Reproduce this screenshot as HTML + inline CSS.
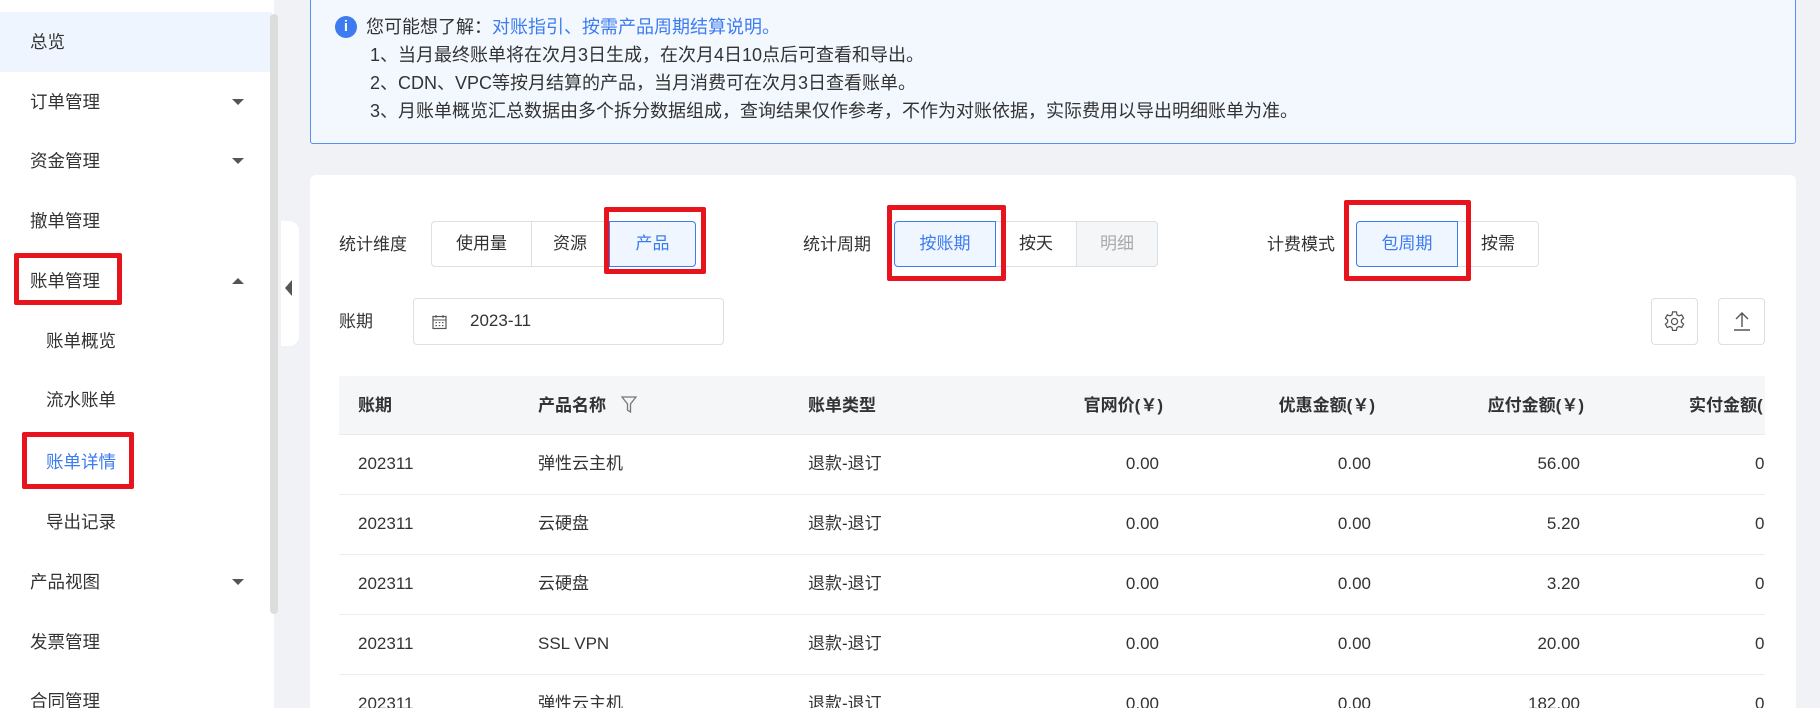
<!DOCTYPE html>
<html><head><meta charset="utf-8"><style>
*{box-sizing:border-box;margin:0;padding:0}
html,body{overflow:hidden}
body{width:1820px;height:708px;background:#f0f2f5;font-family:"Liberation Sans","Noto Sans CJK SC",sans-serif;color:#333;position:relative}
.abs{position:absolute}
.side{left:0;top:0;width:274px;height:708px;background:#fff;overflow:hidden}
.item{position:absolute;left:0;width:272px;height:60px;font-size:17.5px;line-height:60px;padding-left:30px;color:#333}
.item.sub{padding-left:46px}
.arr{position:absolute;left:232px;top:27px;width:0;height:0;border-left:6px solid transparent;border-right:6px solid transparent;border-top:6px solid #555}
.arr.up{border-top:none;border-bottom:6px solid #555}
.red{position:absolute;border:5px solid #e8141d;border-radius:2px}
.notice{left:310px;top:-2px;width:1486px;height:146px;background:#f3f8ff;border:1px solid #5a8ff0;border-radius:3px;color:#333}
.card{left:310px;top:175px;width:1486px;height:533px;background:#fff;border-radius:6px 6px 0 0}
.lbl{position:absolute;font-size:17px;line-height:22px;color:#333}
.btn{position:absolute;height:46px;border:1px solid #dcdfe6;font-size:17px;line-height:44px;text-align:center;background:#fff;color:#333}
.btn.sel{background:#eff6ff;border-color:#3d7bf0;color:#3d7bf0;z-index:2}
.btn.dis{background:#f5f6f8;color:#aaa}
.th{position:absolute;font-size:17px;line-height:22px;font-weight:bold;color:#333;top:395px}
.td{position:absolute;font-size:17px;line-height:22px;color:#333}
.r{text-align:right}
#rows{position:absolute;left:0;top:0;width:1820px;height:708px;overflow:hidden}
</style></head><body>
<div class="abs side">
 <div class="item" style="top:12px;background:#eff5ff">总览</div>
 <div class="item" style="top:72px">订单管理<span class="arr"></span></div>
 <div class="item" style="top:131px">资金管理<span class="arr"></span></div>
 <div class="item" style="top:191px">撤单管理</div>
 <div class="item" style="top:251px">账单管理<span class="arr up"></span></div>
 <div class="item sub" style="top:311px">账单概览</div>
 <div class="item sub" style="top:370px">流水账单</div>
 <div class="item sub" style="top:432px;color:#3d7bf0">账单详情</div>
 <div class="item sub" style="top:492px">导出记录</div>
 <div class="item" style="top:552px">产品视图<span class="arr"></span></div>
 <div class="item" style="top:612px">发票管理</div>
 <div class="item" style="top:671px;height:37px;line-height:60px;overflow:hidden">合同管理</div>
</div>
<div class="red" style="left:14px;top:253px;width:108px;height:52px"></div>
<div class="red" style="left:22px;top:432px;width:112px;height:57px"></div>
<div class="abs" style="left:270px;top:14px;width:8px;height:600px;background:#ddd;border-radius:4px"></div>
<div class="abs" style="left:281px;top:221px;width:18px;height:125px;background:#fff;border-radius:0 10px 10px 0"></div>
<div class="abs" style="left:285px;top:280px;width:0;height:0;border-top:8px solid transparent;border-bottom:8px solid transparent;border-right:7px solid #555"></div>

<div class="abs notice">
 <div class="abs" style="left:24px;top:17px;width:22px;height:22px;border-radius:50%;background:#3d7bf0;color:#fff;font-size:15px;font-weight:bold;text-align:center;line-height:22px">i</div>
 <div class="abs" style="left:55px;top:14px;line-height:28px;font-size:18px;white-space:nowrap">您可能想了解：<span style="color:#3d7bf0">对账指引、按需产品周期结算说明。</span></div>
 <div class="abs" style="left:59px;top:42px;line-height:28px;font-size:18px;white-space:nowrap">1、当月最终账单将在次月3日生成，在次月4日10点后可查看和导出。<br>2、CDN、VPC等按月结算的产品，当月消费可在次月3日查看账单。<br>3、月账单概览汇总数据由多个拆分数据组成，查询结果仅作参考，不作为对账依据，实际费用以导出明细账单为准。</div>
</div>

<div class="abs card"></div>
<div class="lbl" style="left:339px;top:234px">统计维度</div>
<div class="btn" style="left:431px;top:221px;width:101px;border-radius:4px 0 0 4px">使用量</div>
<div class="btn" style="left:531px;top:221px;width:78px">资源</div>
<div class="btn sel" style="left:609px;top:221px;width:87px;border-radius:0 4px 4px 0">产品</div>
<div class="red" style="left:604px;top:207px;width:102px;height:67px"></div>

<div class="lbl" style="left:803px;top:234px">统计周期</div>
<div class="btn sel" style="left:894px;top:221px;width:102px;border-radius:4px 0 0 4px">按账期</div>
<div class="btn" style="left:995px;top:221px;width:82px">按天</div>
<div class="btn dis" style="left:1076px;top:221px;width:82px;border-radius:0 4px 4px 0">明细</div>
<div class="red" style="left:887px;top:205px;width:119px;height:76px"></div>

<div class="lbl" style="left:1267px;top:234px">计费模式</div>
<div class="btn sel" style="left:1356px;top:221px;width:102px;border-radius:4px 0 0 4px">包周期</div>
<div class="btn" style="left:1457px;top:221px;width:82px;border-radius:0 4px 4px 0">按需</div>
<div class="red" style="left:1344px;top:200px;width:127px;height:81px"></div>

<div class="lbl" style="left:339px;top:311px">账期</div>
<div class="abs" style="left:413px;top:298px;width:311px;height:47px;border:1px solid #dcdfe6;border-radius:4px"></div>
<svg class="abs" style="left:432px;top:314px" width="15" height="16" viewBox="0 0 15 16"><rect x="1" y="2.5" width="13" height="12" fill="none" stroke="#555" stroke-width="1.2"/><line x1="1" y1="6" x2="14" y2="6" stroke="#555"/><line x1="4" y1="1" x2="4" y2="4" stroke="#555"/><line x1="11" y1="1" x2="11" y2="4" stroke="#555"/><g fill="#555"><rect x="3.5" y="8" width="1.5" height="1.2"/><rect x="6.8" y="8" width="1.5" height="1.2"/><rect x="10" y="8" width="1.5" height="1.2"/><rect x="3.5" y="11" width="1.5" height="1.2"/><rect x="6.8" y="11" width="1.5" height="1.2"/><rect x="10" y="11" width="1.5" height="1.2"/></g></svg>
<div class="lbl" style="left:470px;top:310px">2023-11</div>

<div class="abs" style="left:1651px;top:298px;width:47px;height:47px;border:1px solid #dcdfe6;border-radius:4px"></div>
<svg class="abs" style="left:1663px;top:310px" width="23" height="23" viewBox="0 0 24 24"><path d="M10 2h4l.6 3 2 1.1 2.9-1 2 3.4-2.3 2v2.3l2.3 2-2 3.4-2.9-1-2 1.1-.6 3h-4l-.6-3-2-1.1-2.9 1-2-3.4 2.3-2v-2.3l-2.3-2 2-3.4 2.9 1 2-1.1z" fill="none" stroke="#555" stroke-width="1.3"/><circle cx="12" cy="12" r="3.2" fill="none" stroke="#555" stroke-width="1.3"/></svg>
<div class="abs" style="left:1718px;top:298px;width:47px;height:47px;border:1px solid #dcdfe6;border-radius:4px"></div>
<svg class="abs" style="left:1731px;top:310px" width="22" height="22" viewBox="0 0 22 22"><path d="M11 3v14M5 9l6-6 6 6M3 20h16" fill="none" stroke="#555" stroke-width="1.4"/></svg>

<div class="abs" style="left:339px;top:376px;width:1426px;height:59px;background:#f5f6f8;border-bottom:1px solid #e8eaee"></div>
<div class="th" style="left:358px">账期</div>
<div class="th" style="left:538px">产品名称</div>
<svg class="abs" style="left:621px;top:396px" width="16" height="18" viewBox="0 0 16 18"><path d="M1 1h14l-5.5 7v8l-3-2v-6z" fill="none" stroke="#777" stroke-width="1.3"/></svg>
<div class="th" style="left:808px">账单类型</div>
<div class="th r" style="left:1000px;width:163px">官网价(￥)</div>
<div class="th r" style="left:1200px;width:175px">优惠金额(￥)</div>
<div class="th r" style="left:1400px;width:184px">应付金额(￥)</div>
<div class="abs" style="left:1689px;top:376px;width:76px;height:59px;overflow:hidden"><div class="th" style="left:0;top:19px;white-space:nowrap">实付金额(￥)</div></div>

<div id="rows"></div>
<script>
var d=[["弹性云主机","56.00"],["云硬盘","5.20"],["云硬盘","3.20"],["SSL VPN","20.00"],["弹性云主机","182.00"]];
var h="";
d.forEach(function(r,i){var y=435+i*60;
h+='<div class="abs" style="left:339px;top:'+(y+59)+'px;width:1426px;height:1px;background:#ebedf0"></div>';
var t=y+18;
h+='<div class="td" style="left:358px;top:'+t+'px">202311</div>';
h+='<div class="td" style="left:538px;top:'+t+'px">'+r[0]+'</div>';
h+='<div class="td" style="left:808px;top:'+t+'px">退款-退订</div>';
h+='<div class="td r" style="left:1000px;width:159px;top:'+t+'px">0.00</div>';
h+='<div class="td r" style="left:1200px;width:171px;top:'+t+'px">0.00</div>';
h+='<div class="td r" style="left:1400px;width:180px;top:'+t+'px">'+r[1]+'</div>';
h+='<div class="td" style="left:1755px;top:'+t+'px">0</div>';});
document.getElementById("rows").innerHTML=h;
</script>
</body></html>
